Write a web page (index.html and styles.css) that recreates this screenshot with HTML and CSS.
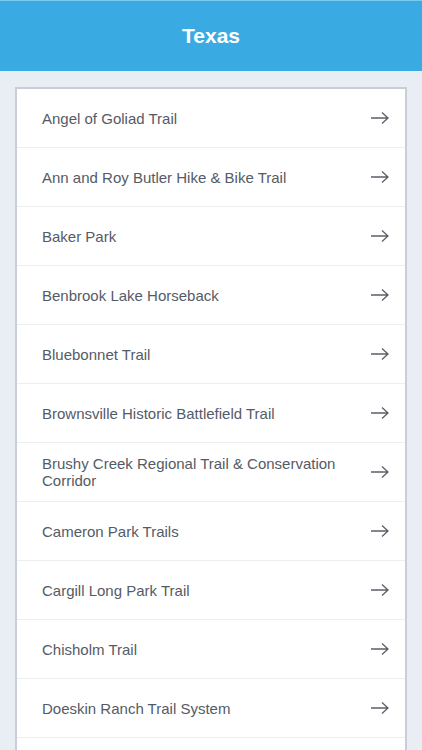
FILE: index.html
```html
<!DOCTYPE html>
<html>
<head>
<meta charset="utf-8">
<link rel="stylesheet" href="styles.css">
</head>
<body>
<header class="topbar"><h1 class="title">Texas</h1></header>
<main class="content">
  <ul class="list">
    <li class="row"><span class="name">Angel of Goliad Trail</span><svg class="arrow" viewBox="0 0 20 14"><path d="M1 7H18M12 1.5L18 7L12 12.5"/></svg></li>
    <li class="row"><span class="name">Ann and Roy Butler Hike &amp; Bike Trail</span><svg class="arrow" viewBox="0 0 20 14"><path d="M1 7H18M12 1.5L18 7L12 12.5"/></svg></li>
    <li class="row"><span class="name">Baker Park</span><svg class="arrow" viewBox="0 0 20 14"><path d="M1 7H18M12 1.5L18 7L12 12.5"/></svg></li>
    <li class="row"><span class="name">Benbrook Lake Horseback</span><svg class="arrow" viewBox="0 0 20 14"><path d="M1 7H18M12 1.5L18 7L12 12.5"/></svg></li>
    <li class="row"><span class="name">Bluebonnet Trail</span><svg class="arrow" viewBox="0 0 20 14"><path d="M1 7H18M12 1.5L18 7L12 12.5"/></svg></li>
    <li class="row"><span class="name">Brownsville Historic Battlefield Trail</span><svg class="arrow" viewBox="0 0 20 14"><path d="M1 7H18M12 1.5L18 7L12 12.5"/></svg></li>
    <li class="row"><span class="name">Brushy Creek Regional Trail &amp; Conservation Corridor</span><svg class="arrow" viewBox="0 0 20 14"><path d="M1 7H18M12 1.5L18 7L12 12.5"/></svg></li>
    <li class="row"><span class="name">Cameron Park Trails</span><svg class="arrow" viewBox="0 0 20 14"><path d="M1 7H18M12 1.5L18 7L12 12.5"/></svg></li>
    <li class="row"><span class="name">Cargill Long Park Trail</span><svg class="arrow" viewBox="0 0 20 14"><path d="M1 7H18M12 1.5L18 7L12 12.5"/></svg></li>
    <li class="row"><span class="name">Chisholm Trail</span><svg class="arrow" viewBox="0 0 20 14"><path d="M1 7H18M12 1.5L18 7L12 12.5"/></svg></li>
    <li class="row"><span class="name">Doeskin Ranch Trail System</span><svg class="arrow" viewBox="0 0 20 14"><path d="M1 7H18M12 1.5L18 7L12 12.5"/></svg></li>
  </ul>
</main>
</body>
</html>
```
FILE: styles.css
```css
html, body {
  margin: 0;
  padding: 0;
  height: 100%;
  overflow: hidden;
}
body {
  background: #e9eef5;
  font-family: "Liberation Sans", Arial, sans-serif;
  display: flex;
  flex-direction: column;
}
.topbar {
  height: 71px;
  flex: none;
  background: #3aabe2;
  border-top: 1px solid #7cc8ef;
  box-sizing: border-box;
  display: flex;
  align-items: center;
  justify-content: center;
}
.title {
  margin: 0;
  color: #ffffff;
  font-size: 21px;
  font-weight: bold;
}
.content {
  flex: 1;
  display: flex;
  flex-direction: column;
  padding: 16px 15px 0 15px;
}
.list {
  flex: 1;
  list-style: none;
  margin: 0;
  padding: 0;
  background: #ffffff;
  border: 2px solid #c9ced6;
  border-bottom: none;
}
.row {
  height: 59px;
  box-sizing: border-box;
  border-bottom: 1px solid #eceef2;
  display: flex;
  align-items: center;
  padding: 0 15px 0 25px;
  gap: 20px;
}
.name {
  flex: 1;
  color: #555b66;
  font-size: 15px;
  line-height: 17px;
}
.arrow {
  width: 20px;
  height: 14px;
  flex: none;
  fill: none;
  stroke: #5a5f68;
  stroke-width: 1.3;
}
```
